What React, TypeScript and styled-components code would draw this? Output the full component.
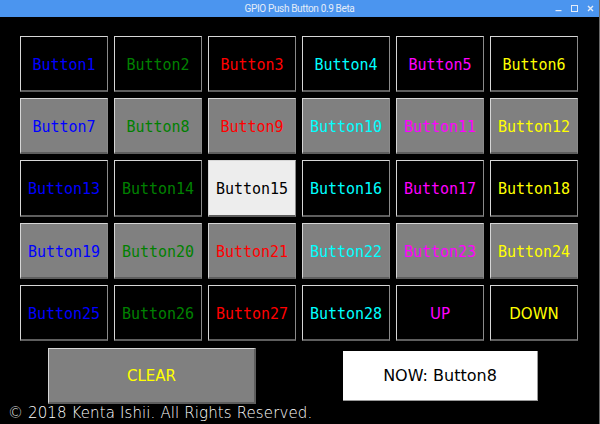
import React from "react";
import styled, { createGlobalStyle } from "styled-components";

const Global = createGlobalStyle`
  html, body { margin: 0; padding: 0; background: #000; }
  body { width: 600px; height: 424px; overflow: hidden; }
`;

const Window = styled.div`
  width: 600px;
  height: 424px;
  background: #000;
  display: flex;
  flex-direction: column;
  box-sizing: border-box;
  border-right: 1px solid #6a6a6a;
  position: relative;
`;

const TitleBar = styled.div`
  height: 17px;
  background: #4b95ef;
  display: flex;
  align-items: center;
  justify-content: center;
  position: relative;
  font-family: Roboto, "DejaVu Sans", sans-serif;
  font-size: 10px;
  letter-spacing: -0.35px;
  color: #e4ecf8;
`;

const Controls = styled.div`
  position: absolute;
  right: 5px;
  top: 0;
  height: 17px;
  display: flex;
  align-items: center;
  gap: 9px;
`;

const Grid = styled.div`
  margin: 19px 0 0 20px;
  display: grid;
  grid-template-columns: repeat(6, 88px);
  grid-template-rows: 56px 56px 57px 56px 56px;
  gap: 6px;
`;

type Tone = "black" | "grey" | "light";

const bgFor = (t: Tone) => (t === "grey" ? "#808080" : t === "light" ? "#ededed" : "#000");

const GpioButton = styled.div<{ $tone: Tone; $fg: string; $mono: boolean }>`
  box-sizing: border-box;
  background: ${(p) => bgFor(p.$tone)};
  color: ${(p) => p.$fg};
  border-top: 1px solid #d6d6d6;
  border-left: 1px solid #d6d6d6;
  border-right: 1px solid #8a8a8a;
  border-bottom: 2px solid #5e5e5e;
  display: flex;
  align-items: center;
  justify-content: center;
  font-family: ${(p) => (p.$mono ? `"DejaVu Sans Mono", monospace` : `"DejaVu Sans", sans-serif`)};
  font-size: 15px;
  padding-top: 2px;
`;

const BottomRow = styled.div`
  margin: 7px 0 0 48px;
  display: flex;
  align-items: center;
  gap: 87px;
`;

const ClearButton = styled.div`
  box-sizing: border-box;
  width: 208px;
  height: 56px;
  background: #808080;
  color: #ffff00;
  border-top: 1px solid #d6d6d6;
  border-left: 1px solid #d6d6d6;
  border-right: 2px solid #5e5e5e;
  border-bottom: 2px solid #5e5e5e;
  display: flex;
  align-items: center;
  justify-content: center;
  font-family: "DejaVu Sans", sans-serif;
  font-size: 15px;
`;

const NowLabel = styled.div`
  box-sizing: border-box;
  width: 195px;
  height: 50px;
  background: #fff;
  color: #000;
  border-right: 1px solid #9a9a9a;
  border-bottom: 1px solid #9a9a9a;
  display: flex;
  align-items: center;
  justify-content: center;
  font-family: "DejaVu Sans", sans-serif;
  font-size: 16px;
`;

const Copyright = styled.div`
  margin: -1px 0 0 8px;
  line-height: 20px;
  font-family: "DejaVu Sans ExtraLight", "DejaVu Sans", sans-serif;
  font-weight: 200;
  font-size: 15px;
  letter-spacing: 0.12px;
  color: #fff;
  white-space: nowrap;
`;

const colors = ["#0000ff", "#008000", "#ff0000", "#00ffff", "#ff00ff", "#ffff00"];

type Btn = { label: string; tone: Tone; fg: string; mono: boolean };

const buttons: Btn[] = [];
for (let r = 0; r < 5; r++) {
  for (let c = 0; c < 6; c++) {
    const n = r * 6 + c + 1;
    let label = `Button${n}`;
    let mono = true;
    if (n === 29) { label = "UP"; mono = false; }
    if (n === 30) { label = "DOWN"; mono = false; }
    let tone: Tone = r % 2 === 1 ? "grey" : "black";
    let fg = colors[c];
    if (n === 15) { tone = "light"; fg = "#000"; }
    buttons.push({ label, tone, fg, mono });
  }
}

const Icon = styled.svg`
  display: block;
`;

export default function App() {
  return (
    <>
      <Global />
      <Window>
        <TitleBar>
          GPIO Push Button 0.9 Beta
          <Controls>
            <Icon width="7" height="7" viewBox="0 0 7 7">
              <rect x="0.5" y="5" width="6" height="1.2" fill="#e4ecf8" />
            </Icon>
            <Icon width="7" height="7" viewBox="0 0 7 7">
              <rect x="0.5" y="0.5" width="6" height="6" fill="none" stroke="#e4ecf8" strokeWidth="1" />
            </Icon>
            <Icon width="7" height="7" viewBox="0 0 7 7">
              <path d="M1 1 L6 6 M6 1 L1 6" stroke="#e4ecf8" strokeWidth="1.4" />
            </Icon>
          </Controls>
        </TitleBar>
        <Grid>
          {buttons.map((b) => (
            <GpioButton key={b.label} $tone={b.tone} $fg={b.fg} $mono={b.mono}>
              {b.label}
            </GpioButton>
          ))}
        </Grid>
        <BottomRow>
          <ClearButton>CLEAR</ClearButton>
          <NowLabel>NOW: Button8</NowLabel>
        </BottomRow>
        <Copyright>© 2018 Kenta Ishii. All Rights Reserved.</Copyright>
      </Window>
    </>
  );
}
